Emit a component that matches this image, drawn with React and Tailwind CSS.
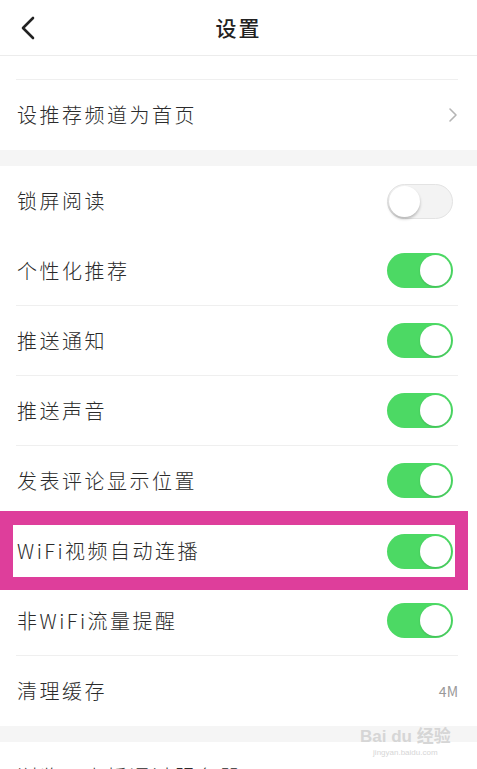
import React from "react";

const font = { fontFamily: '"Noto Sans CJK SC", "Noto Sans", sans-serif' };

function Toggle({ on }) {
  if (on) {
    return (
      <div className="mr-[5px] h-[35px] w-[66px] rounded-full bg-[#4cd964] flex items-center justify-end pr-[2px]">
        <div className="h-[31px] w-[31px] rounded-full bg-white shadow-[0_1px_2px_rgba(0,0,0,0.15)]" />
      </div>
    );
  }
  return (
    <div className="mr-[5px] h-[35px] w-[66px] rounded-full bg-[#f3f3f3] border border-[#e3e3e3] flex items-center pl-[1px]">
      <div className="h-[31px] w-[31px] rounded-full bg-white shadow-[0_2px_3px_rgba(0,0,0,0.25)]" />
    </div>
  );
}

function Row({ label, right, line = true }) {
  return (
    <div className={`ml-[16px] mr-[19px] h-[70px] flex items-center justify-between ${line ? "border-b border-[#efefef]" : ""}`}>
      <span className="pl-[1px] text-[20px] font-light tracking-[2.5px] text-[#2b2b2b]" style={font}>{label}</span>
      {right}
    </div>
  );
}

export default function App() {
  return (
    <div className="relative w-[477px] h-[769px] overflow-hidden bg-white" style={font}>
      <div className="h-[56px] border-b border-[#ececec] grid grid-cols-[60px_1fr_60px] items-center">
        <div className="pl-[20px] flex items-center">
          <svg width="16" height="24" viewBox="0 0 16 24" fill="none">
            <path d="M13 2 L3 12 L13 22" stroke="#222" strokeWidth="2.6" strokeLinecap="round" strokeLinejoin="round" />
          </svg>
        </div>
        <div className="text-center text-[21px] font-medium tracking-[2px] text-[#222]">设置</div>
        <div />
      </div>
      <div className="h-[24px] ml-[16px] mr-[19px] border-b border-[#efefef]" />
      <Row
        label="设推荐频道为首页"
        line={false}
        right={
          <svg width="10" height="16" viewBox="0 0 10 16" fill="none">
            <path d="M2 2 L8 8 L2 14" stroke="#b5b5b5" strokeWidth="1.6" strokeLinecap="round" strokeLinejoin="round" />
          </svg>
        }
      />
      <div className="h-[16px] bg-[#f5f5f5]" />
      <Row label="锁屏阅读" line={false} right={<Toggle on={false} />} />
      <Row label="个性化推荐" right={<Toggle on />} />
      <Row label="推送通知" right={<Toggle on />} />
      <Row label="推送声音" right={<Toggle on />} />
      <Row label="发表评论显示位置" right={<Toggle on />} />
      <Row label="WiFi视频自动连播" line={false} right={<Toggle on />} />
      <Row label="非WiFi流量提醒" right={<Toggle on />} />
      <Row label="清理缓存" line={false} right={<span className="text-[14px] text-[#999]">4M</span>} />
      <div className="h-[16px] bg-[#f5f5f5]" />
      <Row label="浏览、点播通过服务器" line={false} right={<span />} />

      <div className="absolute left-0 top-[511px] w-[468px] h-[79px] border-[#de3e9b] border-l-[13px] border-r-[13px] border-t-[14px] border-b-[13px]" />

      <div className="absolute left-[360px] top-[726px] flex flex-col items-center text-[#d6d6d6]">
        <span className="text-[17px] font-bold leading-[22px]" style={{ fontFamily: '"Liberation Sans", "Noto Sans CJK SC", sans-serif' }}>Bai du 经验</span>
        <span className="text-[8px] leading-[10px]" style={{ fontFamily: '"Liberation Sans", sans-serif' }}>jingyan.baidu.com</span>
      </div>
    </div>
  );
}
